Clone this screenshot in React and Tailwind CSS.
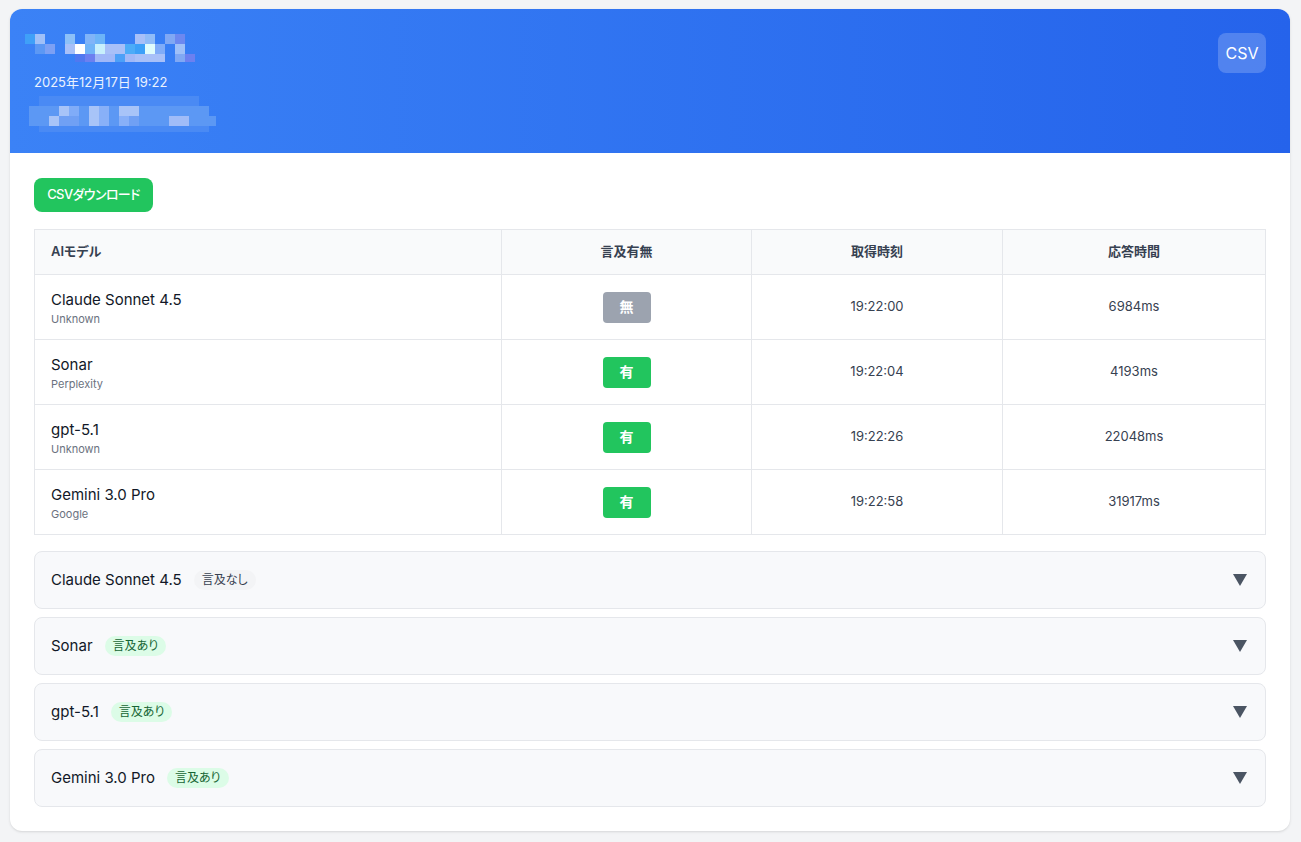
const title = [
  [25, 34, 10, 10, "#3fa0f8"], [35, 34, 10, 10, "#a0c0f8"], [65, 34, 10, 10, "#8cc0f8"],
  [85, 34, 10, 10, "#80b4f8"], [95, 34, 10, 10, "#6cb4f8"], [135, 34, 10, 10, "#a8c0f8"],
  [145, 34, 10, 10, "#90bcf8"], [165, 34, 10, 10, "#80a8f4"], [175, 34, 10, 10, "#6c88f0"],
  [35, 44, 10, 10, "#5c98f4"], [45, 44, 10, 10, "#7ca0f4"], [65, 44, 10, 10, "#a8c0f8"],
  [75, 44, 10, 10, "#ffffff"], [85, 44, 10, 10, "#70b4f8"], [95, 44, 10, 10, "#c8f0fc"],
  [105, 44, 20, 10, "#a8c0f8"], [125, 44, 10, 10, "#4cacf8"], [135, 44, 10, 10, "#3ca0f8"],
  [145, 44, 10, 10, "#e0fcfc"], [155, 44, 10, 10, "#80acf8"], [175, 44, 10, 10, "#a0c0f8"],
  [75, 54, 10, 8, "#5078f0"], [85, 54, 10, 8, "#6c80f0"], [95, 54, 20, 8, "#a0b8f8"],
  [115, 54, 10, 8, "#4ca0f8"], [125, 54, 10, 8, "#a0b8f8"], [135, 54, 30, 8, "#a8c0f8"],
  [175, 54, 10, 8, "#80a8f4"], [185, 54, 10, 8, "#6c80f0"],
];

const sub = [
  [39, 96, 160, 10, "#4a8af4"],
  [29, 106, 180, 10, "#5c98f4"], [59, 106, 10, 10, "#a8c4f8"], [69, 106, 10, 10, "#80acf8"],
  [89, 106, 10, 10, "#a8c4f8"], [99, 106, 10, 10, "#88b0f8"], [119, 106, 20, 10, "#a8c4f8"],
  [29, 116, 187, 10, "#5c98f4"], [49, 116, 10, 10, "#a8c4f8"], [59, 116, 20, 10, "#70a0f4"],
  [89, 116, 10, 10, "#a8c4f8"], [99, 116, 10, 10, "#88b0f8"], [119, 116, 10, 10, "#88b0f8"],
  [129, 116, 10, 10, "#70a0f4"], [169, 116, 20, 10, "#a0bcf8"],
  [39, 126, 170, 6, "#4a8af4"],
];

const rows = [
  { name: "Claude Sonnet 4.5", vendor: "Unknown", hit: false, time: "19:22:00", ms: "6984ms" },
  { name: "Sonar", vendor: "Perplexity", hit: true, time: "19:22:04", ms: "4193ms" },
  { name: "gpt-5.1", vendor: "Unknown", hit: true, time: "19:22:26", ms: "22048ms" },
  { name: "Gemini 3.0 Pro", vendor: "Google", hit: true, time: "19:22:58", ms: "31917ms" },
];

// blurred title / subtitle, drawn as blocks
function Mosaic({ cells, h }) {
  return (
    <svg className="absolute left-0 top-0" width="240" height={h} viewBox={`0 0 240 ${h}`}>
      {cells.map(([x, y, w, hh, c], i) => (
        <rect key={i} x={x - 10} y={y - 9} width={w} height={hh} fill={c} />
      ))}
    </svg>
  );
}

export default function App() {
  return (
    <div
      className="min-h-[842px] bg-[#f3f4f6] pl-[10px] pt-[9px] pb-3 [font-feature-settings:'palt']"
      style={{ fontFamily: 'Inter, "Noto Sans CJK JP", sans-serif' }}
    >
      <div className="w-[1280px] bg-white rounded-xl shadow-sm overflow-hidden">
        {/* HEADER */}
        <div className="relative h-[144px] bg-gradient-to-r from-[#3b82f6] to-[#2563eb] px-6 pt-6 flex justify-between">
          <Mosaic cells={[...title, ...sub]} h={144} />
          <div className="relative">
            <div className="h-[40px]"></div>
            <p className="text-[13px] text-white/90 leading-5 -mt-[1px]">2025年12月17日 19:22</p>
          </div>
          <button className="relative w-12 h-10 rounded-lg bg-white/20 text-white text-base">
            CSV
          </button>
        </div>

        {/* BODY */}
        <div className="px-6 pt-[25px] pb-6">
          <button className="w-[119px] h-[34px] rounded-lg bg-[#22c55e] text-white text-[13px] font-medium tracking-[-0.6px]">
            CSVダウンロード
          </button>

          <table className="w-full mt-[17px] border-collapse border border-[#e5e7eb] table-fixed">
            <thead>
              <tr className="bg-[#f9fafb] h-[45px] text-[13px] font-semibold text-[#374151]">
                <th className="w-[467px] border border-[#e5e7eb] text-left px-4 font-semibold">AIモデル</th>
                <th className="w-[250px] border border-[#e5e7eb] font-semibold">言及有無</th>
                <th className="w-[251px] border border-[#e5e7eb] font-semibold">取得時刻</th>
                <th className="border border-[#e5e7eb] font-semibold">応答時間</th>
              </tr>
            </thead>
            <tbody>
              {rows.map((r) => (
                <tr key={r.name} className="h-[65px]">
                  <td className="border border-[#e5e7eb] px-4 pt-[2px]">
                    <div className="text-[15px] text-[#111827] leading-5">{r.name}</div>
                    <div className="text-[11px] text-[#6b7280] leading-4 mt-[1px]">{r.vendor}</div>
                  </td>
                  <td className="border border-[#e5e7eb] text-center">
                    <span
                      className={`inline-flex items-center justify-center w-12 h-[31px] rounded text-white text-sm font-bold ${
                        r.hit ? "bg-[#22c55e]" : "bg-[#9ca3af]"
                      }`}
                    >
                      {r.hit ? "有" : "無"}
                    </span>
                  </td>
                  <td className="border border-[#e5e7eb] text-center text-[13px] text-[#374151]">{r.time}</td>
                  <td className="border border-[#e5e7eb] text-center text-[13px] text-[#374151]">{r.ms}</td>
                </tr>
              ))}
            </tbody>
          </table>

          <div className="mt-4 flex flex-col gap-[8px]">
            {rows.map((r) => (
              <div
                key={r.name}
                className="h-[58px] flex items-center justify-between px-4 bg-[#f8f9fb] border border-[#e5e7eb] rounded-lg"
              >
                <div className="flex items-center gap-3">
                  <span className="text-[15px] text-[#111827]">{r.name}</span>
                  <span
                    className={`px-2 h-5 leading-5 rounded-full text-[12px] ${
                      r.hit ? "bg-[#dcfce7] text-[#166534]" : "bg-[#f3f4f6] text-[#374151]"
                    }`}
                  >
                    {r.hit ? "言及あり" : "言及なし"}
                  </span>
                </div>
                <svg width="16" height="14" viewBox="0 0 16 14" className="mr-[1px]">
                  <path d="M1 1 H15 L8 13 Z" fill="#4b5563" />
                </svg>
              </div>
            ))}
          </div>
        </div>
      </div>
    </div>
  );
}
